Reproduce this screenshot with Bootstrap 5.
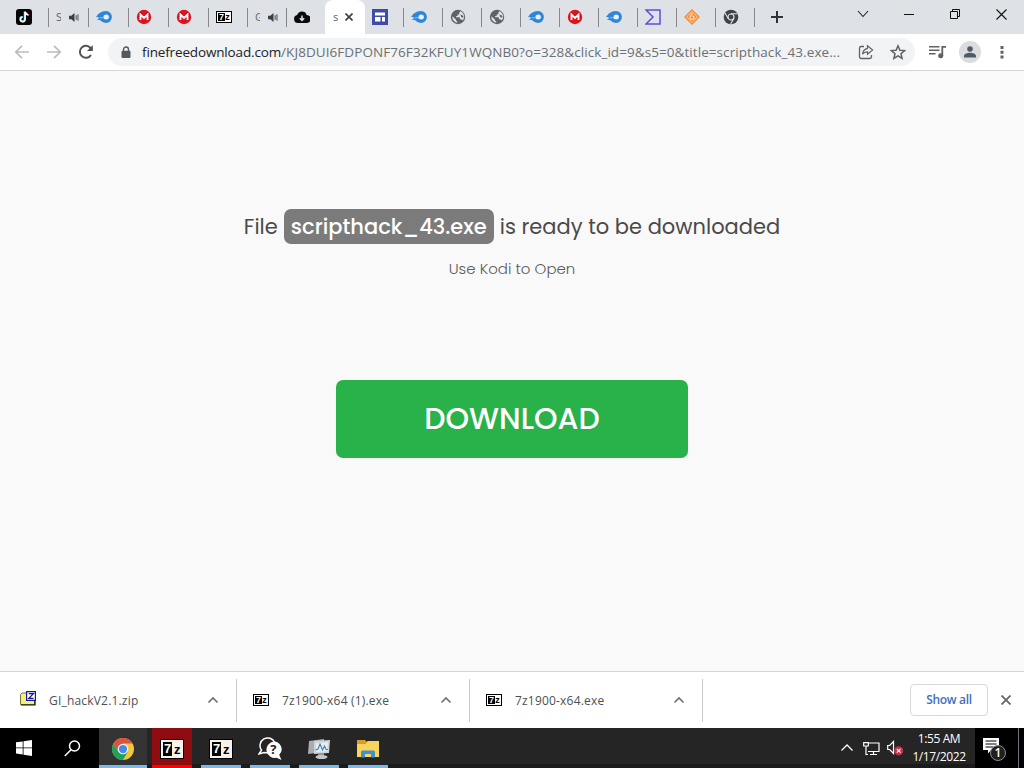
<!DOCTYPE html>
<html lang="en">
  <head>
    <meta charset="UTF-8" />
    <meta name="viewport" content="width=device-width, initial-scale=1.0" />
    <title>scripthack_43.exe</title>
    <link
      href="https://cdn.jsdelivr.net/npm/bootstrap@5.3.0/dist/css/bootstrap.min.css"
      rel="stylesheet"
    />
    <style>
      body {
        font-family: "Open Sans", "Noto Sans", sans-serif;
        font-size: 13px;
        color: #3c4043;
        height: 100vh;
        overflow: hidden;
      }

      svg {
        display: block;
        flex-shrink: 0;
      }

      /* Tab strip */
      .tab-strip {
        height: 34px;
        background-color: #dee1e6;
        padding-left: 8px;
      }

      .tab-item {
        width: 39px;
        height: 34px;
        padding-left: 8px;
        position: relative;
        font-size: 11px;
      }

      .tab-wide {
        width: 40px;
      }

      .tab-item.sep::after {
        content: "";
        position: absolute;
        right: -1px;
        top: 8px;
        width: 1px;
        height: 19px;
        background-color: #85888d;
      }

      .tab-item.current {
        background-color: #fff;
        border-radius: 8px 8px 0 0;
        width: 40px;
        margin-right: -1px;
      }

      .tab-letter {
        width: 5px;
        overflow: hidden;
        color: #5f6368;
      }

      .win-btn {
        width: 46px;
        height: 28px;
      }

      /* Toolbar */
      .toolbar {
        height: 37px;
        border-bottom: 1px solid #d5d7da;
        padding-left: 14px;
      }

      .omnibox {
        width: 807px;
        height: 28px;
        background-color: #f1f3f4;
        padding: 0 9px 0 9px;
      }

      .url {
        width: 701px;
        margin: 1px 0 0 11px;
        font-size: 13.5px;
        letter-spacing: 0.07px;
        color: #6c7074;
      }

      .url span {
        color: #202124;
        letter-spacing: -0.15px;
      }

      .avatar {
        width: 22px;
        height: 22px;
        background-color: #dadce0;
      }

      /* Page */
      .page {
        background-color: #f9f9f9;
        font-family: Poppins, Inter, "Liberation Sans", sans-serif;
        padding-top: 138px;
      }

      .headline {
        font-size: 21px;
        line-height: 35px;
        color: #4a4a4a;
      }

      .file-name {
        background-color: #7b7b7b;
        color: #fff;
        font-weight: 500;
        border-radius: 7px;
        width: 210px;
        height: 35px;
        margin: 0 6px;
      }

      .hint {
        font-size: 15px;
        font-weight: 300;
        line-height: 24px;
        margin-top: 13px;
        color: #5c5c5c;
      }

      .btn-download {
        width: 352px;
        height: 78px;
        margin-top: 99px;
        padding: 0 0 2px;
        border-radius: 7px;
        background-color: #29b249;
        color: #fff;
        font-size: 30px;
        font-weight: 500;
      }

      .btn-download:hover {
        background-color: #249c40;
        color: #fff;
      }

      /* Download shelf */
      .shelf {
        height: 57px;
        border-top: 1px solid #d2d4d6;
      }

      .shelf-item {
        width: 233px;
        height: 43px;
        padding: 0 17px 0 16px;
        border-right: 1px solid #c6c8ca;
      }

      .shelf-item:first-child {
        width: 237px;
        padding-left: 20px;
      }

      .shelf-label {
        margin: 2px 0 0 13px;
        font-size: 12px;
        letter-spacing: 0.19px;
        color: #4d5053;
      }

      .btn-show {
        width: 78px;
        height: 32px;
        border: 1px solid #d5d8dc;
        border-radius: 4px;
        font-size: 12px;
        font-weight: 600;
        letter-spacing: -0.3px;
        color: #3f6fc0;
        padding: 0;
      }

      /* Taskbar */
      .taskbar {
        height: 40px;
        background: linear-gradient(#252525 36px, #1b1b1b 36px);
        color: #fff;
      }

      .task-black {
        background-color: #000;
        height: 40px;
      }

      .task {
        width: 40px;
        height: 40px;
        margin-right: 9px;
        border-bottom: 3px solid #76b9ed;
        background-color: #252525;
      }

      .task-chrome {
        width: 48px;
        margin-right: 5px;
        background-color: #333;
      }

      .task-alert {
        background-color: #8e0c10;
        border-color: #f00;
      }

      .clock {
        width: 66px;
        font-size: 12px;
        line-height: 18px;
        letter-spacing: -0.4px;
      }

      /* 7-Zip icon */
      .zip-icon {
        width: 16px;
        height: 12px;
        border: 1px solid #000;
        outline: 0 solid #000;
        padding: 1px;
        background-color: #fff;
        font: 700 9px/8px "Liberation Sans", sans-serif;
        color: #000;
        flex-shrink: 0;
      }

      .zip-icon b {
        width: 7px;
        height: 8px;
        background-color: #000;
        color: #fff;
        text-align: center;
      }

      .zip-icon i {
        width: 5px;
        font-style: normal;
        text-align: center;
      }

      .zip-lg {
        width: 24px;
        height: 20px;
        padding: 2px;
        background-color: #f6f2ea;
        font-size: 13px;
        line-height: 14px;
      }

      .zip-lg b {
        width: 10px;
        height: 14px;
      }

      .zip-lg i {
        width: 8px;
        margin-left: 1px;
        line-height: 16px;
      }
    </style>
  </head>

  <body class="d-flex flex-column m-0">
    <!-- Shared icons -->
    <svg width="0" height="0" class="position-absolute">
      <symbol id="mediafire" viewBox="0 0 16 12">
        <path d="M0 6.200C1.800 3.200 5 .1 10 .1A5.900 5.900 0 0 1 10 11.900C7 11.900 5.600 10.300 4.200 9.300 3 8.500 1.700 8.600.8 9c.6-1 1.500-1.700 2.700-2.100C2.300 6 1.200 5.900 0 6.200z" fill="#2f86d8" />
        <path d="M4 7c1.800-.7 3-.3 4.200.1" fill="none" stroke="#9cc9f2" stroke-width=".9" />
        <ellipse cx="10.200" cy="5.900" rx="2.700" ry="2.500" fill="#e6f1fb" />
      </symbol>
      <symbol id="mega" viewBox="0 0 16 16">
        <circle cx="8" cy="8" r="7.200" fill="#dc1420" />
        <path d="M4.500 11V5.600L8 9l3.500-3.400V11" fill="none" stroke="#fff" stroke-width="1.800" />
      </symbol>
      <symbol id="globe" viewBox="0 0 16 16">
        <circle cx="8" cy="8" r="7.200" fill="#5f6368" />
        <path d="M10.300 2.300L9.200 4v1.400H7.600v1.500H6.100v1.300h3.700v2h1.500l1.400 1.300A5.700 5.700 0 0 0 10.300 2.300z" fill="#dee1e6" />
        <path d="M2.400 7.200l3.700 3.500v1l1.200.8v1.200A5.700 5.700 0 0 1 2.400 7.200z" fill="#dee1e6" />
        <path d="M10.500 5.600l2.800 1.200v2l-2.200-.8z" fill="#5f6368" />
      </symbol>
      <symbol id="speaker" viewBox="0 0 12 12">
        <path d="M0 4h2.500L6 1v10L2.500 8H0z" fill="#3c4043" />
        <path d="M7.800 3.500v5M9.800 2.500v7" stroke="#3c4043" stroke-width="1" />
      </symbol>
      <symbol id="chevron-up" viewBox="0 0 12 8">
        <path d="M1.500 6.500L6 2l4.500 4.500" fill="none" stroke="currentColor" stroke-width="1.600" />
      </symbol>
    </svg>

    <!-- Tabs -->
    <div class="tab-strip d-flex flex-shrink-0">
      <div class="tab-item tab-wide sep d-flex align-items-center">
        <svg width="16" height="16" viewBox="0 0 16 16"><rect width="16" height="16" rx="3" fill="#050505" /><path d="M10.200 3.500c.3 1.700 1.300 2.500 2.700 2.600" fill="none" stroke="#ee3a5c" stroke-width="1.700" /><path d="M8.600 2.600v7.600a2.200 2.200 0 1 1-2.300-2.200" fill="none" stroke="#39d8de" stroke-width="1.800" /><path d="M9.100 2.800v7.500a2.300 2.300 0 1 1-2.300-2.300M9.200 2.800c.2 1.800 1.300 2.800 3.100 2.900" fill="none" stroke="#fff" stroke-width="1.600" /></svg>
      </div>
      <div class="tab-item tab-wide sep d-flex align-items-center">
        <span class="tab-letter">S</span>
        <svg class="ms-2" width="11" height="11"><use href="#speaker" /></svg>
      </div>
      <div class="tab-item tab-wide sep d-flex align-items-center"><svg width="16" height="12"><use href="#mediafire" /></svg></div>
      <div class="tab-item tab-wide sep d-flex align-items-center"><svg width="16" height="16"><use href="#mega" /></svg></div>
      <div class="tab-item tab-wide sep d-flex align-items-center"><svg width="16" height="16"><use href="#mega" /></svg></div>
      <div class="tab-item sep d-flex align-items-center"><div class="zip-icon d-flex"><b>7</b><i>z</i></div></div>
      <div class="tab-item sep d-flex align-items-center">
        <span class="tab-letter">G</span>
        <svg class="ms-2" width="11" height="11"><use href="#speaker" /></svg>
      </div>
      <div class="tab-item d-flex align-items-center">
        <svg width="16" height="12" viewBox="0 0 16 12"><path d="M4 12a4 4 0 0 1-.8-7.900A5 5 0 0 1 12.700 4 4 4 0 0 1 12.500 12z" fill="#0a0a0a" /><path d="M8 4.500V9M5.800 7.200L8 9.400l2.200-2.200" fill="none" stroke="#dee1e6" stroke-width="1.500" /></svg>
      </div>
      <div class="tab-item current d-flex align-items-center">
        <span class="tab-letter">s</span>
        <svg style="margin-left: 7px" width="8" height="8" viewBox="0 0 8 8"><path d="M.5.5l7 7M7.500.5l-7 7" stroke="#3c4043" stroke-width="1.600" /></svg>
      </div>
      <div class="tab-item sep d-flex align-items-center">
        <svg width="16" height="16" viewBox="0 0 16 16"><path d="M0 0h16v16H0z" fill="#3f4ba4" /><path d="M3 3.500h10v3H3zM3 8h5.500v4.500H3zM10 8h3v4.500h-3z" fill="#fff" /></svg>
      </div>
      <div class="tab-item sep d-flex align-items-center"><svg width="16" height="12"><use href="#mediafire" /></svg></div>
      <div class="tab-item sep d-flex align-items-center"><svg width="16" height="16"><use href="#globe" /></svg></div>
      <div class="tab-item sep d-flex align-items-center"><svg width="16" height="16"><use href="#globe" /></svg></div>
      <div class="tab-item sep d-flex align-items-center"><svg width="16" height="12"><use href="#mediafire" /></svg></div>
      <div class="tab-item sep d-flex align-items-center"><svg width="16" height="16"><use href="#mega" /></svg></div>
      <div class="tab-item sep d-flex align-items-center"><svg width="16" height="12"><use href="#mediafire" /></svg></div>
      <div class="tab-item sep d-flex align-items-center">
        <svg width="16" height="16" viewBox="0 0 16 16"><path d="M1 1h14v14H1l7-7z" fill="none" stroke="#5a50dc" stroke-width="1.500" /></svg>
      </div>
      <div class="tab-item sep d-flex align-items-center">
        <svg width="16" height="16" viewBox="0 0 16 16"><path d="M8 0l8 8-8 8-8-8z" fill="#f58a35" /><path d="M8 2.500L2.500 8 8 13.500 13.500 8z" fill="none" stroke="#f9d9bd" stroke-width=".9" /><path d="M8.500 4.500C6.800 5.700 5.800 6.800 5.900 8.500c.1 1.400 1.200 2.100 2.400 2 1.300-.1 2.100-1.200 1.700-2.300-.3-.8-1-1.100-1.800-1" fill="none" stroke="#fbe3cf" stroke-width="1.200" /></svg>
      </div>
      <div class="tab-item sep d-flex align-items-center">
        <svg width="16" height="16" viewBox="0 0 16 16"><circle cx="8" cy="8" r="7.300" fill="#3f4347" /><circle cx="8" cy="8" r="3" fill="#3f4347" stroke="#dee1e6" stroke-width="1.200" /><path d="M8 4.800h6.500M5.200 9.600L2 4M10.800 9.600L7.600 15" stroke="#dee1e6" stroke-width="1.100" /></svg>
      </div>
      <svg class="align-self-center" style="margin-left: 16px" width="14" height="14" viewBox="0 0 14 14"><path d="M7 1v12M1 7h12" stroke="#303338" stroke-width="2" /></svg>

      <div class="d-flex ms-auto">
        <div class="win-btn d-flex align-items-center justify-content-center"><svg width="12" height="8" viewBox="0 0 12 8"><path d="M1 1l5 5.500L11 1" fill="none" stroke="#222" stroke-width="1.100" /></svg></div>
        <div class="win-btn d-flex align-items-center justify-content-center"><svg width="10" height="10" viewBox="0 0 10 10"><path d="M0 5.500h10" stroke="#111" /></svg></div>
        <div class="win-btn d-flex align-items-center justify-content-center"><svg width="10" height="10" viewBox="0 0 10 10"><path d="M.5 2.500h7v7h-7zM2.500 2.500v-2h7v7h-2" fill="none" stroke="#111" /></svg></div>
        <div class="win-btn d-flex align-items-center justify-content-center"><svg width="11" height="11" viewBox="0 0 11 11"><path d="M.5.5l10 10M10.500.5l-10 10" stroke="#111" stroke-width="1.100" /></svg></div>
      </div>
    </div>

    <!-- Toolbar -->
    <div class="toolbar d-flex align-items-center flex-shrink-0 bg-white">
      <svg width="16" height="16" viewBox="0 0 16 16"><path d="M15 8H2M8 1.800L1.800 8 8 14.200" fill="none" stroke="#babcbe" stroke-width="1.700" /></svg>
      <svg style="margin-left: 16px" width="16" height="16" viewBox="0 0 16 16"><path d="M1 8h13M8 1.800L14.200 8 8 14.200" fill="none" stroke="#babcbe" stroke-width="1.700" /></svg>
      <svg style="margin-left: 16px" width="16" height="16" viewBox="0 0 16 16"><path d="M13 11A6 6 0 1 1 12.500 4L14 5.600" fill="none" stroke="#505357" stroke-width="2" /><path d="M14.800 1v6H9z" fill="#505357" /></svg>

      <div class="omnibox rounded-pill d-flex align-items-center" style="margin-left: 14px">
        <svg class="ms-1" width="10" height="13" viewBox="0 0 10 13"><path d="M2.500 5V3.500a2.500 2.500 0 0 1 5 0V5" fill="none" stroke="#55585c" stroke-width="1.400" /><rect x=".5" y="4.700" width="9" height="7.300" rx="1" fill="#55585c" /></svg>
        <div class="url text-nowrap"><span>finefreedownload.com</span>/KJ8DUI6FDPONF76F32KFUY1WQNB0?o=328&amp;click_id=9&amp;s5=0&amp;title=scripthack_43.exe...</div>
        <svg class="ms-auto" width="16" height="16" viewBox="0 0 16 16"><path d="M6 2.500H3.200A1.700 1.700 0 0 0 1.500 4.200v8.600a1.700 1.700 0 0 0 1.700 1.700h8.600a1.700 1.700 0 0 0 1.700-1.700V11" fill="none" stroke="#5f6368" stroke-width="1.300" /><path d="M9.500 1.800L14.600 6l-5.100 4.200V7.800c-2.200 0-3.800.7-5 2.400.4-3 2-5.300 5-5.900z" fill="none" stroke="#5f6368" stroke-width="1.200" /></svg>
        <svg style="margin-left: 16px" width="16" height="16" viewBox="0 0 16 16"><path d="M8 1.800l1.900 4.400 4.700.4-3.600 3.100 1.100 4.700L8 11.900l-4.100 2.500L5 9.700 1.400 6.600l4.700-.4z" fill="none" stroke="#5f6368" stroke-width="1.500" /></svg>
      </div>

      <svg style="margin-left: 14px" width="17" height="14" viewBox="0 0 17 14"><path d="M0 1.800h10.500M0 5.300h10.500M0 8.800h6.500" stroke="#5f6368" stroke-width="1.600" /><path d="M13.300 11V1.800H17" fill="none" stroke="#5f6368" stroke-width="1.800" /><circle cx="11.700" cy="10.800" r="2.500" fill="#5f6368" /></svg>
      <div class="avatar rounded-circle d-flex align-items-center justify-content-center" style="margin-left: 13px">
        <svg width="12" height="12" viewBox="0 0 12 12"><circle cx="6" cy="3" r="2.800" fill="#4e5b66" /><path d="M0 11.500V10c0-2 3.500-3.200 6-3.200S12 8 12 10v1.500z" fill="#4e5b66" /></svg>
      </div>
      <svg style="margin-left: 19px" width="4" height="14" viewBox="0 0 4 14"><path d="M.5 1h3v3h-3zM.5 5.700h3v3h-3zM.5 10.400h3v3h-3z" fill="#5f6368" /></svg>
    </div>

    <!-- Page -->
    <main class="page flex-grow-1 d-flex flex-column align-items-center">
      <div class="headline d-flex justify-content-center text-nowrap">
        <span>File</span>
        <span class="file-name d-flex align-items-center justify-content-center">scripthack_43.exe</span>
        <span>is ready to be downloaded</span>
      </div>
      <div class="hint">Use Kodi to Open</div>
      <button type="button" class="btn btn-download border-0">DOWNLOAD</button>
    </main>

    <!-- Download shelf -->
    <div class="shelf d-flex align-items-center flex-shrink-0 bg-white">
      <div class="shelf-item d-flex align-items-center">
        <svg class="mb-1" width="16" height="16" viewBox="0 0 16 16"><path d="M.5 4.500L2 3h4l1 2h7.500v9.500H.5z" fill="#f2f07a" stroke="#77763c" /><path d="M1 15h14V9" fill="none" stroke="#111" stroke-width="1.200" /><path d="M6.600 1.600h8.800v8.800H6.600z" fill="#fff" stroke="#16168e" stroke-width="1.200" /><path d="M8.700 3.700h4.600L8.900 8.300h4.600" fill="none" stroke="#16168e" stroke-width="1.300" /></svg>
        <span class="shelf-label">GI_hackV2.1.zip</span>
        <svg class="ms-auto" width="12" height="8" color="#6d7073"><use href="#chevron-up" /></svg>
      </div>
      <div class="shelf-item d-flex align-items-center">
        <div class="zip-icon d-flex"><b>7</b><i>z</i></div>
        <span class="shelf-label">7z1900-x64 (1).exe</span>
        <svg class="ms-auto" width="12" height="8" color="#6d7073"><use href="#chevron-up" /></svg>
      </div>
      <div class="shelf-item d-flex align-items-center">
        <div class="zip-icon d-flex"><b>7</b><i>z</i></div>
        <span class="shelf-label">7z1900-x64.exe</span>
        <svg class="ms-auto" width="12" height="8" color="#6d7073"><use href="#chevron-up" /></svg>
      </div>
      <button type="button" class="btn btn-show ms-auto">Show all</button>
      <svg style="margin: 0 13px" width="10" height="10" viewBox="0 0 10 10"><path d="M.5.5l9 9M9.500.5l-9 9" stroke="#5f6368" stroke-width="1.700" /></svg>
    </div>

    <!-- Taskbar -->
    <div class="taskbar d-flex align-items-center flex-shrink-0">
      <div class="task-black d-flex align-items-center" style="width: 99px">
        <svg style="margin-left: 16px" width="16" height="16" viewBox="0 0 16 16"><path d="M0 2.300L6.700 1.400v6.100H0zM7.500 1.300L16 0v7.500H7.500zM0 8.300h6.700v6.200L0 13.600zM7.500 8.300H16V16l-8.500-1.300z" fill="#fff" /></svg>
        <svg style="margin-left: 32px" width="17" height="17" viewBox="0 0 17 17"><circle cx="10.500" cy="6" r="5" fill="none" stroke="#fff" stroke-width="1.500" /><path d="M7 9.800L.8 16" stroke="#fff" stroke-width="1.500" /></svg>
      </div>
      <div class="task task-chrome d-flex align-items-center justify-content-center">
        <svg class="mt-1" width="22" height="22" viewBox="0 0 24 24"><circle cx="12" cy="12" r="12" fill="#f3c73c" /><path d="M1.600 6L6.800 15 12 12V6h10.400A12 12 0 0 0 1.600 6z" fill="#de5145" /><path d="M1.600 6A12 12 0 0 0 12 24l5.200-9H6.800z" fill="#22a05c" /><circle cx="12" cy="12" r="5.800" fill="#f4f4f4" /><circle cx="12" cy="12" r="4.500" fill="#4a87ec" /></svg>
      </div>
      <div class="task task-alert d-flex align-items-center justify-content-center"><div class="zip-icon zip-lg d-flex mt-1"><b>7</b><i>z</i></div></div>
      <div class="task d-flex align-items-center justify-content-center"><div class="zip-icon zip-lg d-flex mt-1"><b>7</b><i>z</i></div></div>
      <div class="task d-flex align-items-center justify-content-center">
        <svg class="mt-1" width="24" height="24" viewBox="0 0 24 24"><path d="M1 17l2.500-3.800A7.700 7.700 0 1 1 12 16l-6-.5z" fill="#252525" stroke="#fff" stroke-width="1.500" /><path d="M15.500 4.500a8 7.700 0 0 1 5.700 13.200l2.300 5.300-5-2.200A8 7.700 0 1 1 15.500 4.500z" fill="#fff" /><text x="12.200" y="17" font-family="Open Sans" font-weight="700" font-size="13" fill="#252525">?</text></svg>
      </div>
      <div class="task d-flex align-items-center justify-content-center">
        <svg class="mt-1" width="24" height="22" viewBox="0 0 24 22"><path d="M2 3l15-2v13L1 16z" fill="#a9adb0" /><path d="M7 3l16-1-1 13-15 1z" fill="#d0d4d6" /><path d="M9 5l12-.8-.8 9L9 14z" fill="#e6edf1" /><path d="M8.500 12l2.500-1 2-5 2.500 6 2-4 1.500 3.500h2" fill="none" stroke="#3d83b5" stroke-width="1.100" /><path d="M11 15h6v3h-6z" fill="#92979a" /><ellipse cx="14.500" cy="19" rx="6" ry="2" fill="#c4c8ca" /></svg>
      </div>
      <div class="task d-flex align-items-center justify-content-center">
        <svg class="mt-1" width="22" height="18" viewBox="0 0 22 18"><path d="M0 0h8l2 2v3H0z" fill="#d99e27" /><path d="M0 4h9l1.500-3H22v16H0z" fill="#f8d35e" /><path d="M4 17.500V12q0-1.500 1.500-1.500h11Q18 10.500 18 12v5.500h-4V14H8v3.500z" fill="#3c92cd" /></svg>
      </div>

      <svg class="ms-auto" width="14" height="10" viewBox="0 0 14 10"><path d="M1.500 7.500L7 2l5.500 5.500" fill="none" stroke="#fff" stroke-width="1.300" /></svg>
      <svg style="margin-left: 9px" width="17" height="15" viewBox="0 0 17 15"><path d="M5 2h11v8.500H5M10.500 10.500v3M7 13.500h7M3 5v8.500h2M.7 1.700h4.600V5H.7z" fill="none" stroke="#fff" stroke-width="1.200" /></svg>
      <svg style="margin-left: 7px" width="17" height="16" viewBox="0 0 17 16"><path d="M.7 5.500h2L6.500 1.500v12l-3.800-4h-2z" fill="none" stroke="#fff" stroke-width="1.200" /><circle cx="11.700" cy="10.800" r="4.600" fill="#c8304a" /><path d="M9.800 8.900l3.800 3.800M13.600 8.900l-3.800 3.800" stroke="#fff" stroke-width="1.100" /></svg>
      <div class="clock text-center text-nowrap" style="margin: 0 3px 0 2px">1:55 AM<br />1/17/2022</div>
      <div class="task-black d-flex align-items-center" style="width: 49px">
        <svg style="margin-left: 7px" width="28" height="26" viewBox="0 0 28 26"><path d="M1 3h16v12H9l-3 3.500V15H1z" fill="#fff" /><path d="M3.500 6h11M3.500 9h11M3.500 12h8" stroke="#000" stroke-width="1" /><circle cx="16" cy="18" r="7.500" fill="#202020" stroke="#8d8d8d" /><text x="16" y="22.300" text-anchor="middle" font-family="Open Sans" font-size="12" font-weight="600" fill="#fff">1</text></svg>
        <div class="border-start border-secondary ms-auto h-100" style="width: 6px"></div>
      </div>
    </div>

    <script src="https://cdn.jsdelivr.net/npm/bootstrap@5.3.0/dist/js/bootstrap.bundle.min.js"></script>
  </body>
</html>
